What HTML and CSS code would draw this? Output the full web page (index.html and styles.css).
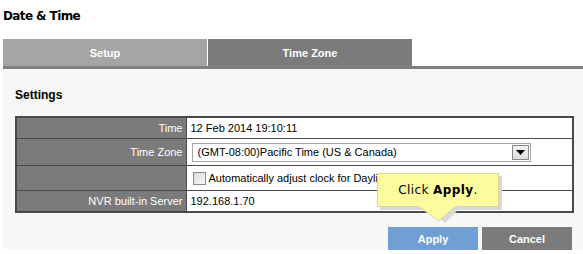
FILE: index.html
```html
<!DOCTYPE html>
<html>
<head>
<meta charset="utf-8">
<link rel="stylesheet" href="styles.css">
</head>
<body>
<h1 class="title">Date &amp; Time</h1>
<div class="tabs">
  <div class="tab tab-setup">Setup</div>
  <div class="tab tab-active">Time Zone</div>
</div>
<div class="panel">
  <h2 class="section">Settings</h2>
  <table class="grid">
    <tr class="r1"><td class="lbl">Time</td><td class="val">12 Feb 2014 19:10:11</td></tr>
    <tr class="r2"><td class="lbl">Time Zone</td><td class="val">
      <div class="select"><span class="sel-text">(GMT-08:00)Pacific Time (US &amp; Canada)</span><span class="sel-btn"><svg width="9" height="5" viewBox="0 0 9 5"><path d="M0 0H9L4.5 5Z" fill="#000"/></svg></span></div>
    </td></tr>
    <tr class="r3"><td class="lbl"></td><td class="val"><span class="chk"></span><span class="chk-text">Automatically adjust clock for Daylight Saving Time</span></td></tr>
    <tr class="r4"><td class="lbl">NVR built-in Server</td><td class="val">192.168.1.70</td></tr>
  </table>
  <div class="actions">
    <button class="btn btn-apply">Apply</button>
    <button class="btn btn-cancel">Cancel</button>
  </div>
  <div class="callout">
    <div class="callout-box"><span>Click <b>Apply</b>.</span></div>
    <svg class="callout-arrow" width="70" height="20" viewBox="0 0 70 20">
      <path d="M14 0H52L35 17Z" fill="#d8d8d8"/>
      <path d="M8 0H46L29 15Z" fill="#fcfc9e" stroke="#d6d6a0" stroke-width="1"/>
      <rect x="8.5" y="-1" width="37" height="2" fill="#fcfc9e"/>
    </svg>
  </div>
</div>
</body>
</html>
```
FILE: styles.css
```css
html, body { margin: 0; padding: 0; background: #fff; }
body { font-family: "Liberation Sans", Arial, sans-serif; font-size: 11px; color: #000; width: 583px; height: 254px; overflow: hidden; }
.title { margin: 0; padding: 9px 0 0 3px; height: 39px; box-sizing: border-box; font-family: "DejaVu Sans", sans-serif; font-size: 12px; font-weight: bold; line-height: 14px; letter-spacing: -0.6px; }
.tabs { display: flex; margin-left: 3px; height: 27px; }
.tab { width: 204px; display: flex; align-items: center; justify-content: center; color: #fff; font-weight: bold; font-size: 11px; }
.tab-setup { background: #a5a5a5; border-right: 1px solid #fff; }
.tab-active { background: #7b7b7b; }
.panel { position: relative; margin-left: 3px; border-top: 3px solid #808080; background: #f7f7f7; height: 183px; box-sizing: border-box; padding: 0 9px 0 12px; }
.section { margin: 0; padding-top: 19px; height: 47px; box-sizing: border-box; font-size: 12px; font-weight: bold; line-height: 14px; }
.grid { width: 559px; border-collapse: collapse; border: 2px solid #4a4a4a; font-size: 11px; }
.grid td { border: 1px solid #4a4a4a; padding: 0; }
.lbl { width: 170px; background: #7b7b7b; color: #fff; text-align: right; padding-right: 3px !important; box-sizing: border-box; }
.val { background: #fff; padding-left: 4px !important; color: #000; white-space: nowrap; }
.r1 td { height: 20px; }
.r2 td { height: 26px; }
.r3 td { height: 24px; }
.r4 td { height: 20px; }
.select { width: 337px; height: 17px; border: 1px solid #a5a5a5; box-sizing: content-box; display: flex; align-items: center; justify-content: space-between; background: #fff; margin-left: 1px; }
.sel-text { padding-left: 5px; }
.sel-btn { width: 15px; height: 13px; margin-right: 1px; border: 1px solid #888; background: linear-gradient(#f4f4f4, #dcdcdc); display: flex; align-items: center; justify-content: center; }
.chk { display: inline-block; width: 11px; height: 11px; border: 1px solid #8a8a8a; background: linear-gradient(135deg, #dcdcdc, #f8f8f8); vertical-align: -3px; margin: 0 3px 0 2px; }
.actions { display: flex; justify-content: flex-end; gap: 4px; margin-top: 14px; margin-right: 2px; }
.btn { width: 90px; height: 23px; border: 0; color: #fff; font-family: "Liberation Sans", Arial, sans-serif; font-weight: bold; font-size: 11px; padding: 0; }
.btn-apply { background: #6f9fd3; }
.btn-cancel { background: #7b7b7b; }
.callout { position: absolute; left: 374px; top: 104px; }
.callout-box { width: 122px; height: 34px; box-sizing: border-box; background: #fcfc9e; border: 1px solid #d6d6a0; box-shadow: 3px 3px 0 #d8d8d8; font-family: "DejaVu Sans", sans-serif; font-size: 12px; letter-spacing: 0.4px; display: flex; align-items: center; justify-content: center; }
.callout-arrow { display: block; margin-left: 33px; margin-top: -1px; }
```
